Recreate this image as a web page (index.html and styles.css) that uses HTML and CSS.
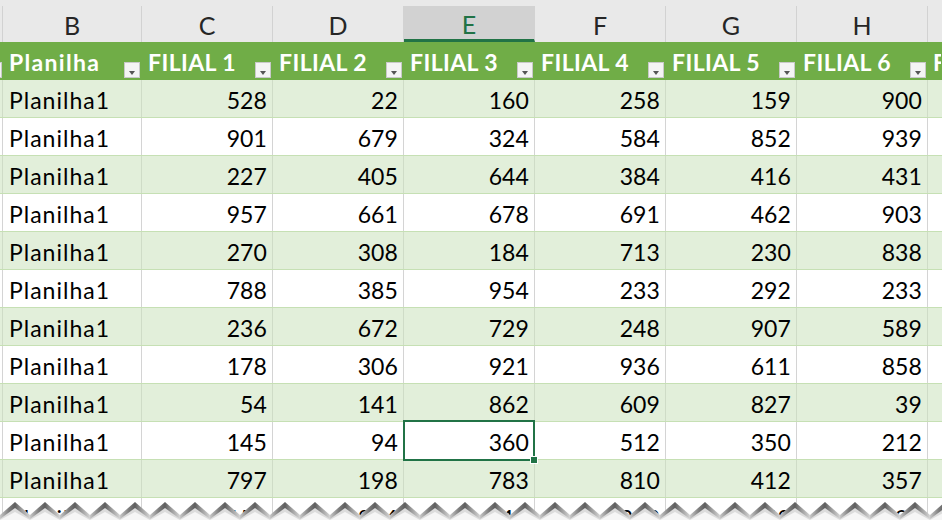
FILE: index.html
```html
<!DOCTYPE html>
<html>
<head>
<meta charset="utf-8">
<link rel="stylesheet" href="styles.css">
</head>
<body>
<div class="sheet">
  <div class="colhead">
    <div class="ch a"></div>
    <div class="ch b">B</div>
    <div class="ch">C</div>
    <div class="ch">D</div>
    <div class="ch sel">E</div>
    <div class="ch">F</div>
    <div class="ch">G</div>
    <div class="ch">H</div>
    <div class="ch i"></div>
  </div>
  <div class="row thead">
    <div class="c a"><span class="dd"></span></div>
    <div class="c b">Planilha<span class="dd"></span></div>
    <div class="c">FILIAL 1<span class="dd"></span></div>
    <div class="c">FILIAL 2<span class="dd"></span></div>
    <div class="c">FILIAL 3<span class="dd"></span></div>
    <div class="c">FILIAL 4<span class="dd"></span></div>
    <div class="c">FILIAL 5<span class="dd"></span></div>
    <div class="c">FILIAL 6<span class="dd"></span></div>
    <div class="c i">FILIAL 7</div>
  </div>
  <div id="rows"></div>
</div>
<svg class="torn" width="942" height="24" viewBox="0 0 942 24" xmlns="http://www.w3.org/2000/svg">
  <defs>
    <linearGradient id="sh" x1="0" y1="0" x2="1" y2="0">
      <stop offset="0" stop-color="#c8c8c8"/>
      <stop offset="0.3" stop-color="#7c7c7c"/>
      <stop offset="0.5" stop-color="#5e5e5e"/>
      <stop offset="0.7" stop-color="#989898"/>
      <stop offset="1" stop-color="#d6d6d6"/>
    </linearGradient>
    <pattern id="tooth" x="0" y="0" width="30" height="24" patternUnits="userSpaceOnUse">
      <polygon points="0,19 15,6 30,19 30,24 0,24" fill="url(#sh)"/>
      <polygon points="0,24 0,23 15,12 30,23 30,24" fill="#dcdcdc"/>
      <polygon points="0,24 15,16 30,24" fill="#f6f6f6"/>
    </pattern>
  </defs>
  <rect x="0" y="0" width="942" height="24" fill="url(#tooth)"/>
</svg>
<script src="app.js"></script>
</body>
</html>
```
FILE: app.js
```js
const data = [
  [528, 22, 160, 258, 159, 900],
  [901, 679, 324, 584, 852, 939],
  [227, 405, 644, 384, 416, 431],
  [957, 661, 678, 691, 462, 903],
  [270, 308, 184, 713, 230, 838],
  [788, 385, 954, 233, 292, 233],
  [236, 672, 729, 248, 907, 589],
  [178, 306, 921, 936, 611, 858],
  [54, 141, 862, 609, 827, 39],
  [145, 94, 360, 512, 350, 212],
  [797, 198, 783, 810, 412, 357],
  [150, 844, 515, 263, 442, 697]
];
const host = document.getElementById('rows');
data.forEach((r, idx) => {
  const row = document.createElement('div');
  row.className = 'row data ' + (idx % 2 === 0 ? 'band' : 'plain');
  let html = '<div class="c a"></div><div class="c b txt">Planilha1</div>';
  r.forEach((v, j) => {
    const sel = (idx === 9 && j === 2) ? ' selected' : '';
    html += '<div class="c num' + sel + '">' + v + '</div>';
  });
  html += '<div class="c i"></div>';
  row.innerHTML = html;
  host.appendChild(row);
});
```
FILE: styles.css
```css
html, body {
  margin: 0;
  padding: 0;
  background: #ffffff;
  overflow: hidden;
  width: 942px;
  height: 520px;
}
body {
  position: relative;
  font-family: Lato, "Open Sans", sans-serif;
}
.sheet {
  width: 942px;
}
.colhead {
  display: flex;
  height: 42px;
  box-sizing: border-box;
  padding-top: 6px;
  background: #e9e9e9;
}
.ch {
  width: 131px;
  flex: none;
  box-sizing: border-box;
  border-right: 1px solid #d2d2d2;
  display: flex;
  align-items: center;
  justify-content: center;
  font-size: 25px;
  color: #262626;
  padding-top: 2px;
}
.ch.a { width: 3px; }
.ch.b { width: 139px; }
.ch.i { width: 14px; border-right: none; }
.ch.sel {
  background: #d2d2d2;
  color: #217346;
  border-bottom: 3px solid #217346;
  padding-top: 3px;
}
.row {
  display: flex;
  height: 38px;
  box-sizing: border-box;
}
.c {
  width: 131px;
  flex: none;
  box-sizing: border-box;
  border-right: 1px solid #d4d4d4;
  display: flex;
  align-items: center;
  padding: 2px 5px 0 6px;
  font-size: 23px;
  color: #000;
  white-space: nowrap;
  overflow: hidden;
  position: relative;
}
.c.a { width: 3px; padding: 0; }
.c.b { width: 139px; }
.c.txt { letter-spacing: 1px; }
.c.i { width: 14px; border-right: none; }
.c.num { justify-content: flex-end; letter-spacing: 0.1px; }
.thead {
  background: #70ad47;
}
.thead .c {
  color: #ffffff;
  font-weight: 700;
  border-right: 1px solid #70ad47;
  overflow: visible;
  letter-spacing: 0.4px;
}
.thead .c.b { letter-spacing: 1.3px; }
.thead .c.a { overflow: hidden; }
.thead .c.i { overflow: hidden; padding-left: 5px; }
.dd {
  position: absolute;
  right: 1px;
  bottom: 2px;
  width: 16px;
  height: 16px;
  box-sizing: border-box;
  background: #f4f4f4;
  border: 1px solid #c9c9c9;
}
.dd::after {
  content: "";
  position: absolute;
  left: 4px;
  top: 8px;
  border-left: 3.5px solid transparent;
  border-right: 3.5px solid transparent;
  border-top: 4px solid #555;
}
.c.a .dd { right: 0; }
.data {
  border-bottom: 1px solid #c6e0b4;
}
.band { background: #e2efda; }
.band .c { border-right-color: #cfdcc7; }
.plain { background: #ffffff; }
.selected::after {
  content: "";
  position: absolute;
  left: -1px;
  top: -2px;
  right: -1px;
  bottom: -2px;
  border: 2px solid #217346;
}
.selected::before {
  content: "";
  position: absolute;
  right: -4px;
  bottom: -5px;
  width: 6px;
  height: 6px;
  background: #217346;
  border: 1px solid #ffffff;
  z-index: 2;
}
.selected { overflow: visible; z-index: 1; }
.torn {
  position: absolute;
  left: 0;
  bottom: 0;
  display: block;
}
```
